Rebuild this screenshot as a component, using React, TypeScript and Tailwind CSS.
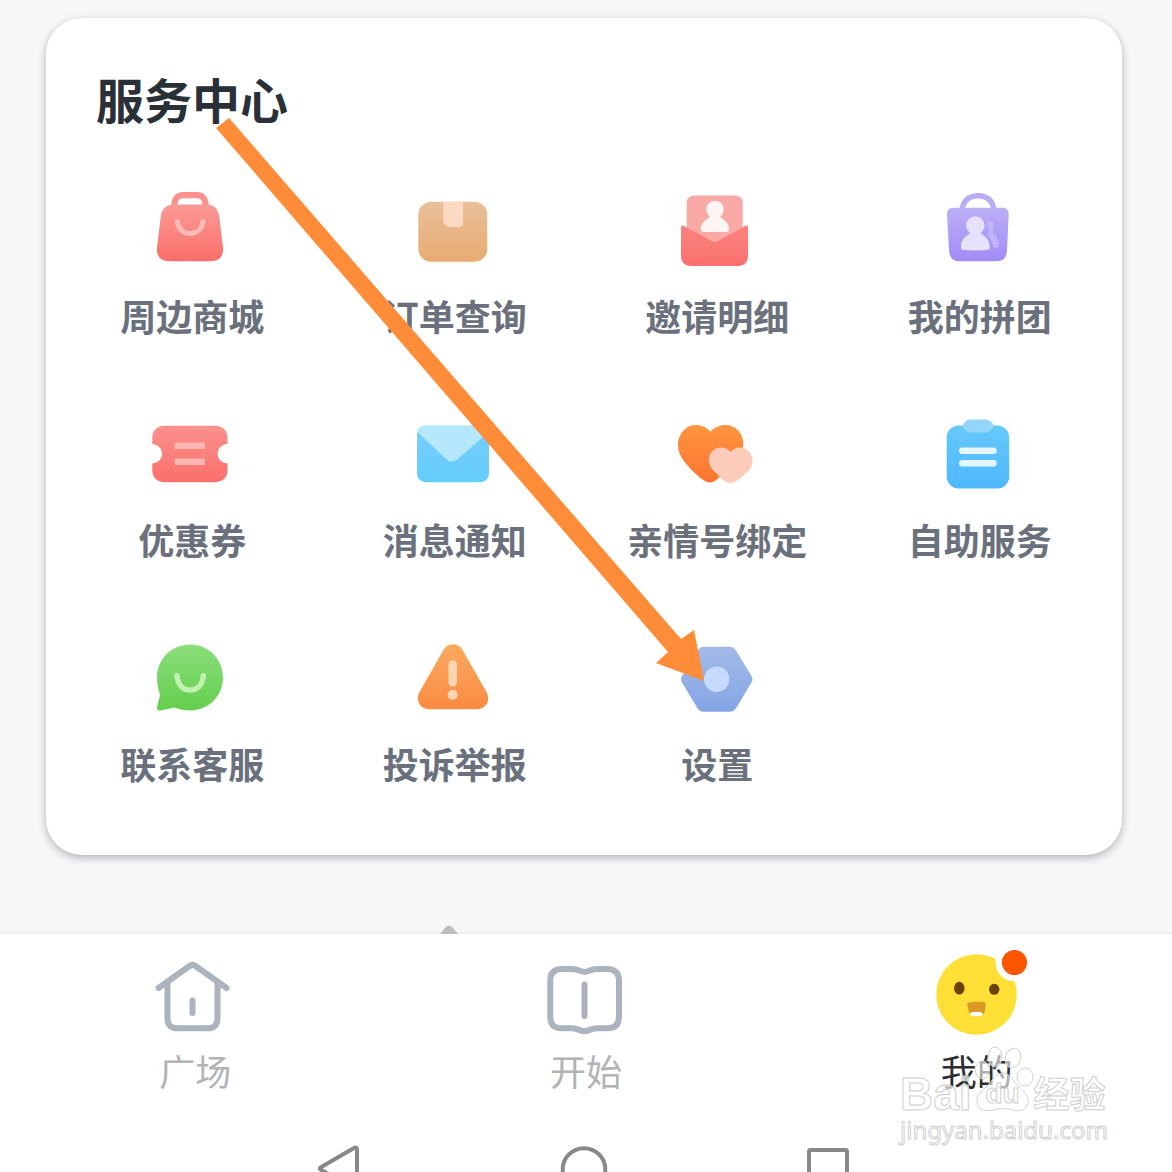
import type { ReactNode } from "react";

const grad = (id: string, from: string, to: string) => (
  <defs>
    <linearGradient id={id} x1="0" y1="0" x2="0" y2="1">
      <stop offset="0" stopColor={from} />
      <stop offset="1" stopColor={to} />
    </linearGradient>
  </defs>
);

function Icon({ children }: { children: ReactNode }) {
  return (
    <svg viewBox="0 0 80 80" className="size-20" fill="none" aria-hidden="true">
      {children}
    </svg>
  );
}

const ShopIcon = () => (
  <Icon>
    {grad("shop", "#fb9a94", "#fb6f6b")}
    <path d="M22.500 18V14.500C22.500 8.500 26 5.200 31 5.200H45C50 5.200 53.500 8.500 53.500 14.500V18" stroke="#fc928d" strokeWidth="6.300" />
    <path d="M22 14.500H54C62 14.500 66.500 19 67.200 26.500L71 57C72 66.500 67 71.200 58.500 71.200H17.500C9 71.200 4 66.500 5 57L8.800 26.500C9.500 19 14 14.500 22 14.500Z" fill="url(#shop)" />
    <path d="M25 29.500C26 39 31 43.500 38 43.500S50.500 39 51.300 29.500" stroke="#fdbcb8" strokeWidth="5" />
  </Icon>
);

const OrderIcon = () => (
  <Icon>
    {grad("order", "#e9c09a", "#e8ab71")}
    <rect x="3.300" y="11.700" width="69" height="60" rx="13" fill="url(#order)" />
    <path d="M28.300 11.700H48V33.500C48 36 46.500 37 44.500 37H38L33 37L28.300 33Z" fill="#fbd9c3" />
  </Icon>
);

const InviteIcon = () => (
  <Icon>
    {grad("invite", "#fb8480", "#fb706d")}
    <path d="M17 5.500H58.500C62.500 5.500 65.700 8.500 65.700 12.500V60H9.700V12.500C9.700 8.500 13 5.500 17 5.500Z" fill="#fba9a6" />
    <path d="M4 37C4 35.500 5.700 35 7 35.900L35.500 51.200C37 52 39 52 40.500 51.200L68 35.900C69.500 35 71 35.500 71 37V66C71 72 67 76 61 76H14C8 76 4 72 4 66Z" fill="url(#invite)" />
    <circle cx="38" cy="19.500" r="8.700" fill="#fff5f4" />
    <path d="M33 26H43C43.500 29 52 30.500 52 39C52 41 51 42 49 42H27C25 42 23.700 41 23.700 39C23.700 30.500 32.500 29 33 26Z" fill="#fff5f4" />
  </Icon>
);

const GroupIcon = () => (
  <Icon>
    {grad("group", "#bcb0f5", "#a28bf8")}
    <path d="M22.300 21C22.300 11 29 5.800 38 5.800S53.700 11 53.700 21" stroke="#b9acf4" strokeWidth="5.500" />
    <path d="M14 17.700H62C66.500 17.700 69 20 68.700 24.500L67 60.500C66.500 68 63 71.200 57 71.200H19C13.500 71.200 9.500 68 9 60.500L7 24.500C6.700 20 9.500 17.700 14 17.700Z" fill="url(#group)" />
    <path d="M47 31C52.500 30.500 55 34 53 38.500C51.500 42 54 43.500 56 46C58 49 59 53 58.300 57.500H53.500C52.500 50 50 48.500 47.500 45C50 40 49 36 47 31Z" fill="#c1b5f7" />
    <circle cx="35.300" cy="35.500" r="9.200" fill="#e7e1fc" />
    <path d="M30 43H40.500C43 46.500 49.700 47 49.700 57C49.700 59 49 60 47 60C39 60.500 32 60.500 24 60C22 60 21 59 21 57C21 47 27.500 46.500 30 43Z" fill="#e7e1fc" />
  </Icon>
);

const CouponIcon = () => (
  <Icon>
    {grad("coupon", "#fb918c", "#fb6f6c")}
    <path d="M13 11.700H62.500C70.500 11.700 75.500 16.500 75.500 24V30C69.500 30.500 65.700 34.500 65.700 39.800S69.500 49 75.500 49.500V56C75.500 63.500 70.500 68.200 62.500 68.200H13C5 68.200 .3 63.500 .3 56V49.500C6 49 10 45.100 10 39.800S6 30.500 .3 30V24C.3 16.500 5 11.700 13 11.700Z" fill="url(#coupon)" />
    <path d="M22.700 31.800H53M22.700 47.700H53" stroke="#fdb5b2" strokeWidth="6.500" />
  </Icon>
);

const MailIcon = () => (
  <Icon>
    {grad("mail", "#79cdfb", "#63cdfd")}
    <rect x="2" y="11.700" width="72" height="56.500" rx="8.500" fill="url(#mail)" />
    <path d="M10 11.700H66C70 11.700 74 13.500 74 18L42 45.500C38.500 48.300 35 48.300 31.500 45.500L2 17.500C3 13.500 6 11.700 10 11.700Z" fill="#b5e7fd" />
  </Icon>
);

const HeartIcon = () => (
  <Icon>
    {grad("heart", "#fd9540", "#fd7430")}
    <path d="M33.400 17.700C41 9.500 53 9 60 15.500C68.500 23.500 68 36 61 44.500L41 64.500C36 69.500 31 69.500 25.500 65.500C19 61 12 53.500 6.500 46.500C-1.500 36 -.5 23 7.500 15.500C14.500 9 26 9.500 33.400 17.700Z" fill="url(#heart)" />
    <path d="M53.700 37.700C58.500 32.500 66 32 71 36.500C77 42 77 51 72 56.500L61 66C56 69.800 50.500 69.800 46 66L35.500 55.500C30.500 50 30.500 41.500 36 36.500C41 32 49 32.500 53.700 37.700Z" fill="#fdcbb9" />
  </Icon>
);

const ClipboardIcon = () => (
  <Icon>
    {grad("clip", "#66c9fc", "#4fb7fd")}
    <rect x="6.700" y="11.500" width="62.500" height="63" rx="12" fill="url(#clip)" />
    <path d="M29 5.500H47C49 5.500 53.500 9.500 53.500 12S49 18.500 46 18.500H30C27 18.500 22.700 14.500 22.700 12S27 5.500 29 5.500Z" fill="#94d5fc" />
    <path d="M22.300 36.700H53.500M22.300 49.300H53.500" stroke="#e6f6ff" strokeWidth="6.500" strokeLinecap="round" />
  </Icon>
);

const ChatIcon = () => (
  <Icon>
    {grad("chat", "#8bdd7b", "#64cf4e")}
    <path d="M38 6.500C56.500 6.500 71 21 71 39.500S56.500 72.500 38 72.500C32 72.500 27.500 71.200 22.500 69.500L8.500 72.500C6 73 4.500 71.500 5 69L8 57C6 51 5 45.500 5 39.500C5 21 19.500 6.500 38 6.500Z" fill="url(#chat)" />
    <path d="M25 37.700C26 47.500 31.500 52 38 52S50.300 47.500 51.300 37.700" stroke="#bff2af" strokeWidth="5.500" strokeLinecap="round" />
  </Icon>
);

const WarnIcon = () => (
  <Icon>
    {grad("warn", "#fbaa60", "#fb8a42")}
    <path d="M29 11C33 4.500 43 4.500 47 11L71.500 54C76 62 71 71.200 62 71.200H14C5 71.200 0 62 4.500 54Z" fill="url(#warn)" />
    <path d="M37.700 26.500V44.500" stroke="#fdd5b3" strokeWidth="8.500" strokeLinecap="round" />
    <circle cx="37.700" cy="56.700" r="5" fill="#fdd5b3" />
  </Icon>
);

const SettingsIcon = () => (
  <Icon>
    {grad("settings", "#a3bae9", "#84a5e5")}
    <path d="M27 8.700H52.500C55.500 8.700 57.500 10 59 12.500L74.500 38C75.800 40.200 75.800 42.300 74.500 44.500L59.500 69.500C57.500 72.500 55.500 73.700 52.500 73.700H27C24 73.700 22 72.500 20 69.500L5 44.500C3.700 42.300 3.700 40.200 5 38L20.500 12.500C22 10 24 8.700 27 8.700Z" fill="url(#settings)" />
    <circle cx="39.700" cy="41.300" r="12.700" fill="#c5dafc" />
  </Icon>
);

const services = [
  { label: "周边商城", icon: <ShopIcon /> },
  { label: "订单查询", icon: <OrderIcon /> },
  { label: "邀请明细", icon: <InviteIcon /> },
  { label: "我的拼团", icon: <GroupIcon /> },
  { label: "优惠券", icon: <CouponIcon /> },
  { label: "消息通知", icon: <MailIcon /> },
  { label: "亲情号绑定", icon: <HeartIcon /> },
  { label: "自助服务", icon: <ClipboardIcon /> },
  { label: "联系客服", icon: <ChatIcon /> },
  { label: "投诉举报", icon: <WarnIcon /> },
  { label: "设置", icon: <SettingsIcon /> },
];

function TabIcon({ children }: { children: ReactNode }) {
  return (
    <svg viewBox="0 0 100 88" className="h-[88px] w-[100px]" fill="none" aria-hidden="true">
      {children}
    </svg>
  );
}

const tabs = [
  {
    label: "广场",
    active: false,
    icon: (
      <TabIcon>
        <g stroke="#abb3bc" strokeWidth="6" strokeLinecap="round" strokeLinejoin="round">
          <path d="M13.500 38L44.500 16C46.500 14.500 48.500 14.500 50.500 16L81.500 38" />
          <path d="M22.500 32V68.500C22.500 75 26 78.300 32 78.300H63C69 78.300 72.500 75 72.500 68.500V32" />
          <path d="M47.500 50.500V63" />
        </g>
      </TabIcon>
    ),
  },
  {
    label: "开始",
    active: false,
    icon: (
      <TabIcon>
        <g stroke="#abb3bf" strokeWidth="6" strokeLinecap="round" strokeLinejoin="round">
          <path d="M26 19H36C42 19 45 22 48.500 22S55 19 61 19H71.500C79 19 83 23 83 30.500V66.500C83 74.500 79 78.300 71.500 78.300H61C55 78.300 52 81.300 48.500 81.300S42 78.300 36 78.300H26C18 78.300 14.300 74.500 14.300 66.500V30.500C14.300 23 18 19 26 19Z" />
          <path d="M48.500 34.500V66" stroke="#aeafbc" />
        </g>
      </TabIcon>
    ),
  },
  {
    label: "我的",
    active: true,
    icon: (
      <TabIcon>
        <circle cx="49.500" cy="44.500" r="40.300" fill="#fedf36" />
        <circle cx="87.500" cy="12.500" r="19" fill="#fff" />
        <circle cx="87.500" cy="12.500" r="12.600" fill="#ff5500" />
        <ellipse cx="32.300" cy="38.200" rx="5.200" ry="6.400" fill="#6b4205" />
        <ellipse cx="67.200" cy="39.300" rx="5.200" ry="5.500" fill="#6b4205" />
        <path d="M43 52.300C47 51.700 54 51.700 58 52.300Q59 52.500 58.800 54L57.500 63Q57 65 55 65H46Q43.500 65 42 63L40.300 55Q40 52.500 43 52.300Z" fill="#dc9a24" />
        <ellipse cx="49.300" cy="64" rx="6.500" ry="2.300" fill="#fff" />
      </TabIcon>
    ),
  },
];

function Watermark() {
  return (
    <div className="pointer-events-none absolute right-[62px] top-[110px] flex w-[210px] flex-col text-white/70 [-webkit-text-stroke:1px_#cfcfcf]">
      <div className="flex h-[70px] items-end">
        <span className="font-['Liberation_Sans'] text-[46px] font-bold leading-[40px]">Bai</span>
        <span className="relative ml-1 flex h-[70px] w-[54px] items-end justify-center">
          <svg viewBox="0 0 54 70" className="absolute inset-0 overflow-visible" fill="#fff" fillOpacity="0.6" stroke="#d0d0d0" aria-hidden="true">
            <ellipse cx="6.500" cy="26" rx="7" ry="9" />
            <ellipse cx="19" cy="13" rx="7" ry="10" />
            <ellipse cx="37" cy="14" rx="7.500" ry="10" transform="rotate(15 37 14)" />
            <ellipse cx="49" cy="33" rx="8" ry="9" />
            <path d="M27 29C34 29 37 37 42 42C49 48 53 53 52 59C51 66 44 68 37 66C30 64 24 64 17 66C9 68 2 66 1 58C0 51 6 47 11 42C17 36 20 29 27 29Z" />
          </svg>
          <span className="relative font-['Liberation_Sans'] text-[28px] font-bold leading-[40px]">du</span>
        </span>
        <span className="ml-1 text-4xl font-bold leading-[44px]">经验</span>
      </div>
      <span className="font-['Noto_Sans'] text-2xl leading-[32px]">jingyan.baidu.com</span>
    </div>
  );
}

export default function App() {
  return (
    <div className="relative flex min-h-screen flex-col overflow-hidden bg-[#f7f7fa] font-['Noto_Sans_CJK_SC',sans-serif]">
      <main className="pb-[77px] pl-[46px] pr-[50px] pt-[18px]">
        <section className="rounded-[36px] bg-white pb-[68px] pl-[15px] pr-[11px] pt-[52px] shadow-[0_3px_9px_rgba(0,0,0,0.28)]">
          <h1 className="pl-[35px] text-5xl font-bold leading-[56px] text-[#2a3037]">服务中心</h1>
          <div className="mt-16 grid grid-cols-4 gap-y-[75px]">
            {services.map((s) => (
              <button key={s.label} type="button" className="flex flex-col items-center gap-[21px]">
                {s.icon}
                <span className="whitespace-nowrap text-4xl font-bold leading-[48px] text-[#6a707c]">{s.label}</span>
              </button>
            ))}
          </div>
        </section>
      </main>

      <footer className="relative mt-auto border-t-2 border-[#eff0f3] bg-white">
        <svg viewBox="0 0 18 9" className="absolute bottom-full left-[440px] h-[9px] w-[18px]" aria-hidden="true">
          <path d="M0 9L5 3Q9 -2 13 3L18 9Z" fill="#bbbdc0" />
        </svg>
        <nav className="grid grid-cols-3 pt-4">
          {tabs.map((t) => (
            <button key={t.label} type="button" className="flex flex-col items-center gap-[9px]">
              {t.icon}
              <span className={t.active ? "text-4xl leading-[46px] text-[#2b2d30]" : "text-4xl leading-[46px] text-[#b2b3b6]"}>
                {t.label}
              </span>
            </button>
          ))}
        </nav>
        <div className="mt-[49px] grid h-[30px] grid-cols-3 justify-items-center overflow-hidden pl-[216px] pr-[220px]">
          <button type="button" aria-label="返回">
            <svg viewBox="0 0 48 48" className="size-12" fill="none" stroke="#888" strokeWidth="4" strokeLinejoin="round" aria-hidden="true">
              <path d="M5.500 25.500L39 6Q42 4.500 42 8V44Q42 47.500 39 46L5.500 27.500Q4 26.500 5.500 25.500Z" />
            </svg>
          </button>
          <button type="button" aria-label="主页">
            <svg viewBox="0 0 48 48" className="size-12" fill="none" stroke="#888" strokeWidth="4" aria-hidden="true">
              <circle cx="24" cy="27.500" r="21.300" />
            </svg>
          </button>
          <button type="button" aria-label="最近任务">
            <svg viewBox="0 0 48 48" className="size-12" fill="none" stroke="#888" strokeWidth="4" aria-hidden="true">
              <rect x="4" y="8" width="38" height="38" rx="1.500" />
            </svg>
          </button>
        </div>
        <Watermark />
      </footer>

      <svg viewBox="0 0 1172 1172" className="pointer-events-none absolute left-0 top-0 aspect-square w-full" aria-hidden="true">
        <path d="M216 128L229 118L681 639L694 630L704 681L656 663L668 652Z" fill="#fe8c39" />
      </svg>
    </div>
  );
}
